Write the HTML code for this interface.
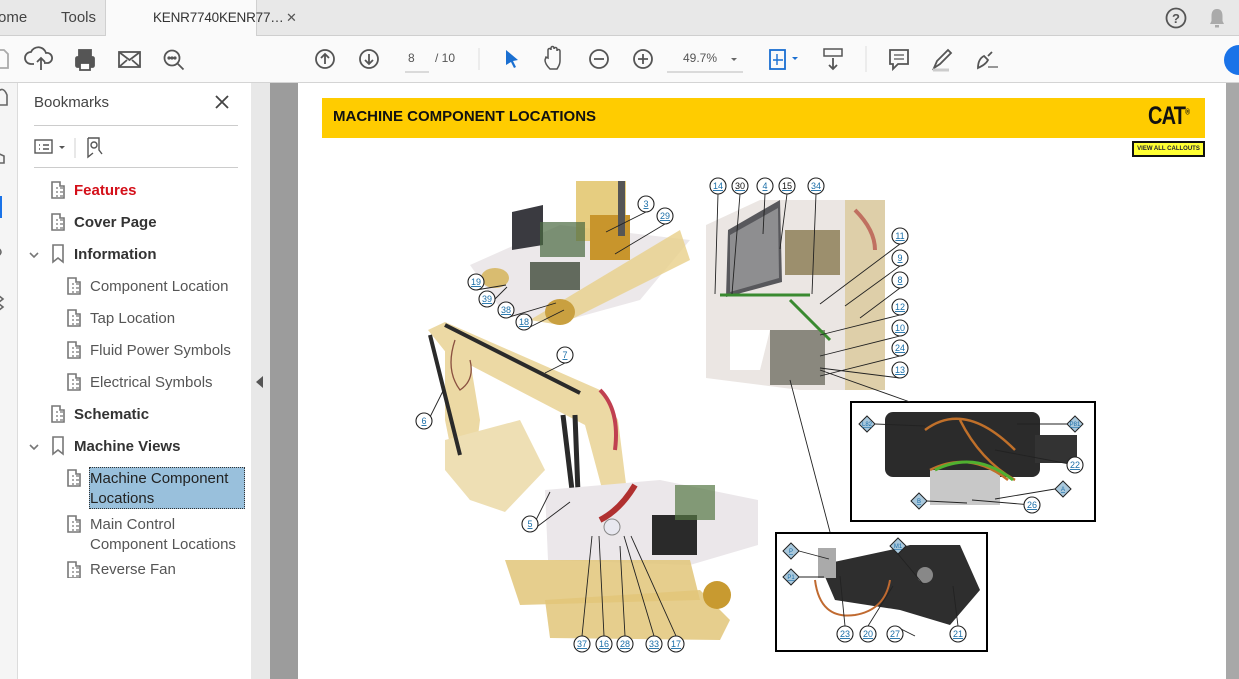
<!DOCTYPE html>
<html><head><meta charset="utf-8"><style>
*{margin:0;padding:0;box-sizing:border-box}
body{width:1239px;height:679px;overflow:hidden;font-family:"Liberation Sans",sans-serif;background:#fff;position:relative}
.abs{position:absolute}
#tabs{left:0;top:0;width:1239px;height:36px;background:#e8e8e8;border-bottom:1px solid #cfcfcf}
#tabs span{position:absolute;top:9px;font-size:15px;color:#444}
#tab{left:105px;top:0;width:152px;height:37px;background:#fafafa;border-right:1px solid #d0d0d0;border-left:1px solid #d0d0d0}
#tb{left:0;top:36px;width:1239px;height:47px;background:#fafafa;border-bottom:1px solid #d4d4d4}
#rail{left:0;top:83px;width:18px;height:596px;background:#f5f5f5;border-right:1px solid #dcdcdc}
#panel{left:18px;top:83px;width:233px;height:596px;background:#fff}
#strip{left:251px;top:83px;width:19px;height:596px;background:#e8e8e8}
#view{left:270px;top:83px;width:969px;height:596px;background:#9c9c9c}
#page{left:298px;top:83px;width:928px;height:596px;background:#fff}
.bm{position:absolute;font-size:15px;color:#555;white-space:nowrap}
.bm.b{font-weight:bold;color:#333}
</style></head><body>
<div id="tabs" class="abs">
 <span style="left:-2px">ome</span><span style="left:61px">Tools</span>
 <div id="tab" class="abs"><span style="left:47px;top:10px;font-size:13.5px;color:#333;letter-spacing:-.2px">KENR7740KENR77…</span><span style="left:180px;top:10px;font-size:13px;color:#555">✕</span></div>
 <svg class="abs" style="left:1164px;top:6px" width="24" height="24"><circle cx="12" cy="12" r="9.5" fill="none" stroke="#555" stroke-width="1.8"/><text x="12" y="17" font-size="13" font-weight="bold" text-anchor="middle" fill="#555" font-family="Liberation Sans">?</text></svg>
 <svg class="abs" style="left:1207px;top:6px" width="20" height="24"><path d="M10 3c-4 0-5.5 3-5.5 7v5L3 18h14l-1.5-3v-5c0-4-1.5-7-5.5-7z" fill="#aaa"/><rect x="8" y="19" width="4" height="2.5" fill="#aaa"/></svg>
</div>
<div id="tb" class="abs">
 <svg class="abs" style="left:0;top:0" width="1239" height="47" fill="none" stroke="#555" stroke-width="1.8">
  <path d="M-2 14h6l4 4v14h-10" stroke="#aaa"/>
  <path d="M34 28h-3a6 6 0 0 1 0-12 8 8 0 0 1 15 1 5 5 0 0 1 2 10h-4M41 34v-12m-4 4 4-4 4 4"/>
  <rect x="76" y="21" width="18" height="10" rx="1.5" fill="#555"/><rect x="79" y="14" width="12" height="6" fill="#555"/><rect x="80" y="27" width="10" height="7" fill="#fff" stroke="#555"/>
  <rect x="119" y="16" width="21" height="15"/><path d="M119 16l10.5 8 10.5-8M119 31l8-7m13 7-8-7"/>
  <circle cx="172" cy="22" r="7.5"/><path d="M177.5 27.5l6 6"/><circle cx="169" cy="22" r=".7" fill="#555"/><circle cx="172" cy="22" r=".7" fill="#555"/><circle cx="175" cy="22" r=".7" fill="#555"/>
  <circle cx="325" cy="23" r="9"/><path d="M325 28v-10m-4 4 4-4 4 4"/>
  <circle cx="369" cy="23" r="9"/><path d="M369 18v10m-4-4 4 4 4-4"/>
  <path d="M405 36h24" stroke="#bbb" stroke-width="1"/>
  <path d="M479 12v22" stroke="#ddd" stroke-width="1"/>
  <path d="M506 14l12 10-5 1 3 6-2 1-3-6-5 3z" fill="#1a6fd1" stroke="none"/>
  <path d="M550 33c-3-3-5-6-5-9l1-3 2 1v-8a1.5 1.5 0 0 1 3 0v-2a1.5 1.5 0 0 1 3 0v1a1.5 1.5 0 0 1 3 0v2a1.5 1.5 0 0 1 3 0v10c0 4-2 6-3 8z" stroke-width="1.5"/>
  <circle cx="599" cy="23" r="9"/><path d="M594 23h10"/>
  <circle cx="643" cy="23" r="9"/><path d="M638 23h10M643 18v10"/>
  <path d="M667 36h76" stroke="#bbb" stroke-width="1"/>
  <path d="M731 22l3 3 3-3z" fill="#666" stroke="none"/>
  <rect x="770" y="14" width="15" height="19" stroke="#1a6fd1"/><path d="M777 18v11m-4-5h10" stroke="#1a6fd1" stroke-width="1.4"/><path d="M792 21l3 3 3-3z" fill="#1a6fd1" stroke="none"/>
  <rect x="824" y="13" width="18" height="7" stroke-width="1.5"/><path d="M833 22v11m-4-4 4 4 4-4"/>
  <path d="M866 10v26" stroke="#ddd" stroke-width="1"/>
  <path d="M890 14h18v14h-10l-5 5v-5h-3z"/><path d="M894 19h10m-10 4h10" stroke-width="1.3"/>
  <path d="M934 32l3-7 11-11 3 3-11 11z"/><path d="M933 34h16" stroke="#ccc" stroke-width="3"/>
  <path d="M978 32c0-6 2-10 6-12l4 4c-2 4-6 6-10 8zm10-12 4-4" /><path d="M988 31h10" stroke-width="1.2"/>
 </svg>
 <div class="abs" style="left:408px;top:15px;font-size:12px;color:#555">8</div>
 <div class="abs" style="left:435px;top:15px;font-size:12px;color:#555">/ 10</div>
 <div class="abs" style="left:683px;top:15px;font-size:12px;color:#555">49.7%</div>
 <div class="abs" style="left:1224px;top:9px;width:30px;height:30px;border-radius:50%;background:#1a73e8"></div>
</div>
<div id="rail" class="abs">
 <svg width="18" height="300" fill="none" stroke="#666" stroke-width="1.6"><path d="M-3 10q6-8 10 2v10h-10"/><path d="M-3 70l7 3v7h-7"/><rect x="-4" y="113" width="6" height="22" fill="#1a73e8" stroke="none"/><path d="M-2 165q6 4 0 8"/><path d="M-2 212l5 4-5 4 5 4-5 4"/></svg>
</div>
<div id="panel" class="abs">
 <div class="bm" style="left:16px;top:11px;font-size:15px;color:#444">Bookmarks</div>
 <svg class="abs" style="left:197px;top:12px" width="14" height="14" stroke="#444" stroke-width="1.8"><path d="M1 1l12 12M13 1 1 13"/></svg>
 <div class="abs" style="left:16px;top:42px;width:204px;height:1px;background:#ccc"></div>
 <svg class="abs" style="left:16px;top:53px" width="100" height="26" fill="none" stroke="#555" stroke-width="1.4"><rect x="1" y="4" width="17" height="13"/><path d="M5 9h1m3 0h6M5 13h1m3 0h6"/><path d="M25 10l3 3 3-3z" fill="#555" stroke="none"/><path d="M41 2v20" stroke="#ddd"/><path d="M54 2h11v12l3 4M54 2v19l5-4" /><circle cx="60" cy="9" r="3"/></svg>
 <div class="abs" style="left:16px;top:84px;width:204px;height:1px;background:#ccc"></div>
 <svg class="abs" style="left:0;top:95px" width="233" height="400" fill="none" stroke="#777" stroke-width="1.6">
  <g id="p"><path d="M34 4h8v4h4v12h-12z"/><path d="M38 10h2m2 0h3M38 14h2m2 0h3M38 18h2m2 0h3" stroke-width="1.3"/></g>
  <use href="#p" y="32"/>
  <path d="M12 75l4 4 4-4"/><path d="M35 67h10v17l-5-4-5 4z"/>
  <use href="#p" x="16" y="96"/><use href="#p" x="16" y="128"/><use href="#p" x="16" y="160"/><use href="#p" x="16" y="192"/>
  <use href="#p" y="224"/>
  <path d="M12 267l4 4 4-4"/><path d="M35 259h10v17l-5-4-5 4z"/>
  <use href="#p" x="16" y="288"/><use href="#p" x="16" y="334"/><use href="#p" x="16" y="380"/>
 </svg>
 <div class="bm b" style="left:56px;top:99px;color:#d4101a">Features</div>
 <div class="bm b" style="left:56px;top:131px">Cover Page</div>
 <div class="bm b" style="left:56px;top:163px">Information</div>
 <div class="bm" style="left:72px;top:195px">Component Location</div>
 <div class="bm" style="left:72px;top:227px">Tap Location</div>
 <div class="bm" style="left:72px;top:259px">Fluid Power Symbols</div>
 <div class="bm" style="left:72px;top:291px">Electrical Symbols</div>
 <div class="bm b" style="left:56px;top:323px">Schematic</div>
 <div class="bm b" style="left:56px;top:355px">Machine Views</div>
 <div class="abs" style="left:71px;top:384px;width:156px;height:42px;background:#99c0dc;border:1px dotted #333"></div>
 <div class="bm" style="left:72px;top:386px;color:#222;line-height:20px">Machine Component<br>Locations</div>
 <div class="bm" style="left:72px;top:432px;line-height:20px">Main Control<br>Component Locations</div>
 <div class="bm" style="left:72px;top:478px">Reverse Fan</div>
</div>
<div id="strip" class="abs"><svg class="abs" style="left:5px;top:293px" width="8" height="12"><path d="M7 0v12L0 6z" fill="#555"/></svg></div>
<div id="view" class="abs"></div>
<div class="abs" style="left:1226px;top:83px;width:13px;height:596px;background:#a8a8a8"></div>
<div id="page" class="abs"></div>
<div class="abs" style="left:322px;top:98px;width:883px;height:40px;background:#ffcc00"></div>
<div class="abs" style="left:333px;top:108px;font-size:15px;font-weight:bold;color:#111">MACHINE COMPONENT LOCATIONS</div>
<div class="abs" style="left:1148px;top:102px;font-size:25px;font-weight:900;color:#111;letter-spacing:-1px;transform:scaleX(.8);transform-origin:left">CAT<sup style="font-size:8px">®</sup></div>
<div class="abs" style="left:1132px;top:141px;width:73px;height:16px;background:#ffff33;border:2px solid #111;font-size:6px;font-weight:bold;color:#223;text-align:center;line-height:12px">VIEW ALL CALLOUTS</div>
<svg class="abs" style="left:0;top:0" width="1239" height="679" font-family="Liberation Sans">
 <polygon points="470,265 560,225 690,240 640,300 560,322 505,315" fill="#ece8ea"/>
 <polygon points="530,320 680,230 690,260 560,325" fill="#e8d08a" opacity=".8"/>
 <ellipse cx="560" cy="312" rx="15" ry="13" fill="#c9a040"/>
 <ellipse cx="495" cy="278" rx="14" ry="10" fill="#d9bc70"/>
 <rect x="576" y="181" width="50" height="60" fill="#e0c060" opacity=".8"/>
 <rect x="590" y="215" width="40" height="45" fill="#c8952c"/>
 <polygon points="512,212 543,205 543,245 512,250" fill="#3a3a40"/>
 <rect x="540" y="222" width="45" height="35" fill="#4a6a40" opacity=".7"/>
 <rect x="530" y="262" width="50" height="28" fill="#404a3a" opacity=".8"/>
 <rect x="618" y="181" width="7" height="55" fill="#555"/>
 <polygon points="706,225 760,200 885,200 885,390 800,390 706,378" fill="#ebe6e3"/>
 <rect x="845" y="200" width="40" height="190" fill="#d8c590" opacity=".7"/>
 <polygon points="728,230 780,200 782,282 726,297" fill="#58585c"/>
 <polygon points="730,235 778,208 779,278 730,292" fill="#8e8e90"/>
 <rect x="785" y="230" width="55" height="45" fill="#7a6a3a" opacity=".7"/>
 <rect x="770" y="330" width="55" height="55" fill="#4a4a3a" opacity=".6"/>
 <path d="M720 295h90M790 300l40 40" stroke="#3a8a30" stroke-width="3"/>
 <path d="M855 210q20 20 20 40" stroke="#c07060" stroke-width="4" fill="none"/>
 <polygon points="730,330 770,330 760,370 730,370" fill="#fff"/>
 <polygon points="428,330 445,322 600,390 618,420 628,500 605,500 585,425 470,365 452,360" fill="#ecd9a4"/>
 <polygon points="445,345 470,360 480,420 470,500 455,470 445,420" fill="#ecd9a4"/>
 <polygon points="445,440 520,420 545,470 505,512 470,500 445,470" fill="#eedfb4"/>
 <path d="M430 335l30 120M445 325l135 68" stroke="#2a2a2a" stroke-width="4"/>
 <path d="M563 415l15 125M575 415l5 130" stroke="#2a2a2a" stroke-width="5"/>
 <polygon points="545,490 660,480 758,500 758,545 690,565 548,560" fill="#ebe7ea"/>
 <polygon points="505,560 690,560 700,600 520,605" fill="#e2c679" opacity=".85"/>
 <polygon points="545,600 700,590 730,620 720,640 550,638" fill="#e2c679" opacity=".85"/>
 <circle cx="717" cy="595" r="14" fill="#c89a30"/>
 <rect x="652" y="515" width="45" height="40" fill="#2a2a2a"/>
 <path d="M600 520q20-10 35-35" stroke="#b03030" stroke-width="6" fill="none"/>
 <rect x="675" y="485" width="40" height="35" fill="#557744" opacity=".7"/>
 <circle cx="612" cy="527" r="8" fill="#e8e8f0" stroke="#888"/>
 <path d="M455 340q-10 30 5 50q15-10 10-30" stroke="#8a5040" stroke-width="1.3" fill="none"/>
 <path d="M600 390q20 20 15 60" stroke="#c04050" stroke-width="4" fill="none"/>
 <rect x="851" y="402" width="244" height="119" fill="#fff" stroke="#000" stroke-width="2"/>
 <rect x="885" y="412" width="155" height="65" rx="8" fill="#2b2b2b"/>
 <rect x="1035" y="435" width="42" height="28" fill="#333"/>
 <rect x="930" y="470" width="70" height="35" fill="#c8c8c8"/>
 <path d="M930 470q40-20 78 10M925 430q40-30 90 20M960 420q20 40 55 60" stroke="#c0702a" stroke-width="2.5" fill="none"/>
 <path d="M935 470q40-20 78 10" stroke="#50b030" stroke-width="3" fill="none"/>
 <rect x="776" y="533" width="211" height="118" fill="#fff" stroke="#000" stroke-width="2"/>
 <polygon points="820,565 890,550 910,545 960,545 980,590 950,625 900,610 835,600" fill="#2e2e2e"/>
 <rect x="818" y="548" width="18" height="30" fill="#aaa"/>
 <circle cx="925" cy="575" r="8" fill="#888"/>
 <path d="M815 580q5 40 40 35q30-5 35-35" stroke="#c06a30" stroke-width="2" fill="none"/>
 <g stroke="#222" stroke-width=".9" fill="none">
  <path d="M718 194l-3 100M740 194l-8 100M765 194l-2 40M787 194l-7 55M816 194l-4 100M900 244l-80 60M900 266l-55 40M900 288l-40 30M900 315l-80 20M900 336l-80 20M900 356l-80 20M900 378l-80-10M820 370l90 32M790 380l40 152M646 212l-40 20M665 224l-50 30M476 290l30-5M487 307l20-20M506 318l50-15M524 330l40-20M565 363l-20 10M424 429l20-40M530 532l20-40M530 532l40-30M582 636l10-100M604 636l-5-100M625 636l-5-90M654 636l-30-100M676 636l-45-100M1075 465l-80-15M1032 505l-60-5M875 424l50 2M1067 424l-50 0M927 501l40 2M1055 489l-60 10M799 551l30 8M799 577l25 0M898 554l25 30M845 626l-5-50M868 626l25-40M895 626l20 10M958 626l-5-40"/>
 </g>
 <g fill="#fff" stroke="#222" stroke-width="1.1">
  <circle cx="718" cy="186" r="8"/><circle cx="740" cy="186" r="8"/><circle cx="765" cy="186" r="8"/><circle cx="787" cy="186" r="8"/><circle cx="816" cy="186" r="8"/>
  <circle cx="900" cy="236" r="8"/><circle cx="900" cy="258" r="8"/><circle cx="900" cy="280" r="8"/><circle cx="900" cy="307" r="8"/><circle cx="900" cy="328" r="8"/><circle cx="900" cy="348" r="8"/><circle cx="900" cy="370" r="8"/>
  <circle cx="646" cy="204" r="8"/><circle cx="665" cy="216" r="8"/><circle cx="476" cy="282" r="8"/><circle cx="487" cy="299" r="8"/><circle cx="506" cy="310" r="8"/><circle cx="524" cy="322" r="8"/>
  <circle cx="565" cy="355" r="8"/><circle cx="424" cy="421" r="8"/><circle cx="530" cy="524" r="8"/>
  <circle cx="582" cy="644" r="8"/><circle cx="604" cy="644" r="8"/><circle cx="625" cy="644" r="8"/><circle cx="654" cy="644" r="8"/><circle cx="676" cy="644" r="8"/>
  <circle cx="1075" cy="465" r="8"/><circle cx="1032" cy="505" r="8"/>
  <circle cx="845" cy="634" r="8"/><circle cx="868" cy="634" r="8"/><circle cx="895" cy="634" r="8"/><circle cx="958" cy="634" r="8"/>
 </g>
 <g fill="#a9c8dc" stroke="#222" stroke-width="1">
  <path d="M867 416l8 8-8 8-8-8z"/><path d="M1075 416l8 8-8 8-8-8z"/><path d="M919 493l8 8-8 8-8-8z"/><path d="M1063 481l8 8-8 8-8-8z"/>
  <path d="M791 543l8 8-8 8-8-8z"/><path d="M791 569l8 8-8 8-8-8z"/><path d="M898 538l8 8-8 8-8-8z"/>
 </g>
 <g font-size="9" fill="#1a6ea8" text-anchor="middle" text-decoration="underline">
  <text x="718" y="189">14</text><text x="740" y="189" fill="#111">30</text><text x="765" y="189">4</text><text x="787" y="189" fill="#111">15</text><text x="816" y="189">34</text>
  <text x="900" y="239">11</text><text x="900" y="261">9</text><text x="900" y="283">8</text><text x="900" y="310">12</text><text x="900" y="331">10</text><text x="900" y="351">24</text><text x="900" y="373">13</text>
  <text x="646" y="207">3</text><text x="665" y="219">29</text><text x="476" y="285">19</text><text x="487" y="302">39</text><text x="506" y="313">38</text><text x="524" y="325">18</text>
  <text x="565" y="358">7</text><text x="424" y="424">6</text><text x="530" y="527">5</text>
  <text x="582" y="647">37</text><text x="604" y="647">16</text><text x="625" y="647">28</text><text x="654" y="647">33</text><text x="676" y="647">17</text>
  <text x="1075" y="468">22</text><text x="1032" y="508">26</text>
  <text x="845" y="637">23</text><text x="868" y="637">20</text><text x="895" y="637">27</text><text x="958" y="637">21</text>
  <g font-size="6"><text x="867" y="426">L82</text><text x="1075" y="426">P81</text><text x="919" y="503">B</text><text x="1063" y="491">A</text><text x="791" y="553">P</text><text x="791" y="579">P1</text><text x="898" y="548">M1</text></g>
 </g>
</svg>
</body></html>
